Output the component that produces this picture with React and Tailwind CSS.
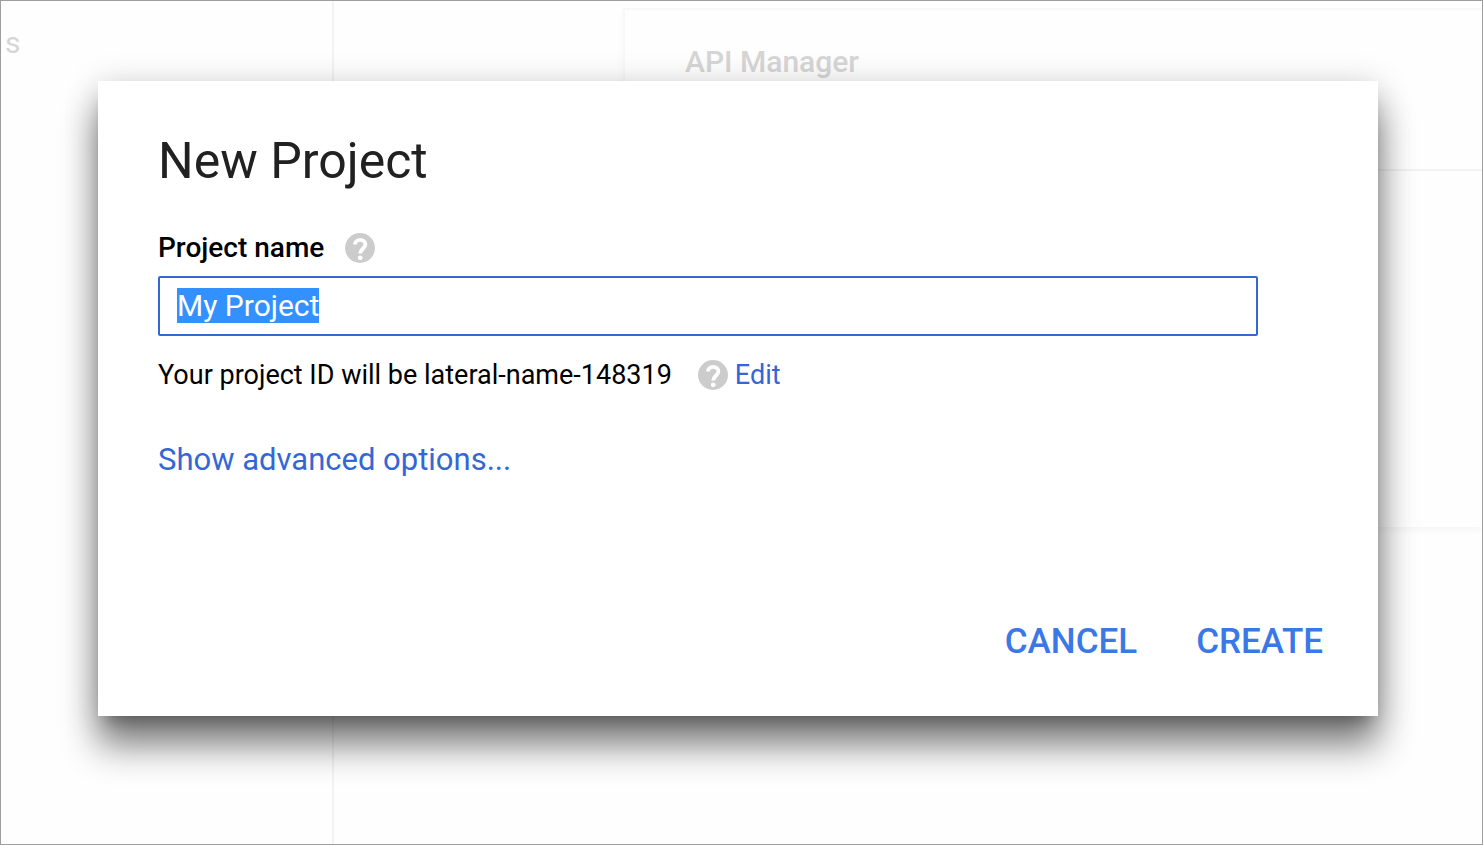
import { useEffect, useRef } from "react";

function HelpButton({ label }) {
  return (
    <button type="button" aria-label={label} className="block shrink-0">
      <svg viewBox="0 0 30 30" className="size-[30px]" aria-hidden="true">
        <circle cx="15" cy="15" r="15" fill="#cccccc" />
        <path
          d="M10 11.6 C10 8.6 12.2 6.9 15.2 6.9 C18.2 6.9 20.4 8.7 20.4 11.6 C20.4 15.2 15.2 16 15.2 20.6"
          fill="none"
          stroke="#ffffff"
          strokeWidth="3.8"
        />
        <circle cx="15.2" cy="24.8" r="2.4" fill="#ffffff" />
      </svg>
    </button>
  );
}

function Backdrop() {
  return (
    <div className="flex min-h-[843px] text-[#d6d6d6]" aria-hidden="true">
      <div className="w-[333px] shrink-0 border-r-2 border-[#f3f3f3] pl-1 pt-6">
        <p className="text-[30px] leading-9">s</p>
      </div>
      <div className="flex-1 pl-[289px] pt-[7px]">
        <div className="h-[519px] border-l-2 border-t-2 border-[#f8f8f8] shadow-[0_4px_6px_rgba(0,0,0,0.03)]">
          <div className="h-[161px] border-b-2 border-[#f2f2f2] pl-[60px] pt-[34px]">
            <p className="text-[30px] leading-9 font-medium">API Manager</p>
          </div>
        </div>
      </div>
    </div>
  );
}

export default function App() {
  const nameRef = useRef(null);

  useEffect(() => {
    nameRef.current.focus();
    nameRef.current.select();
  }, []);

  return (
    <div className="relative min-h-screen overflow-hidden border border-[#9e9e9e] bg-[#fefefe] font-['Roboto',sans-serif]">
      <Backdrop />
      <div className="absolute inset-0 flex items-start pl-[97px] pr-[104px] pt-20">
        <form
          role="dialog"
          aria-labelledby="dialog-title"
          onSubmit={(e) => e.preventDefault()}
          className="flex min-h-[635px] w-full flex-col bg-white px-[60px] pt-[50px] pb-[49px] text-black shadow-[0_30px_34px_rgba(0,0,0,0.48),0_4px_32px_rgba(0,0,0,0.18),0_12px_14px_-8px_rgba(0,0,0,0.26)]"
        >
          <h1 id="dialog-title" className="text-[50px] leading-[60px] text-[#212121]">
            New Project
          </h1>
          <div className="mt-[39px] flex items-center gap-[21px]">
            <label htmlFor="project-name" className="text-[28px] leading-9 font-medium">
              Project name
            </label>
            <HelpButton label="About project names" />
          </div>
          <input
            id="project-name"
            ref={nameRef}
            type="text"
            defaultValue="My Project"
            className="mt-[10px] mr-[60px] h-[60px] rounded-xs border-2 border-[#3367d6] bg-white px-[17px] pb-[2px] text-[30px] leading-[37px] outline-none selection:bg-[#3390ff] selection:text-white"
          />
          <div className="mt-[21px] flex items-center text-[27px] leading-9">
            <p>Your project ID will be lateral-name-148319</p>
            <div className="ml-[26px] flex items-center gap-[7px]">
              <HelpButton label="About project IDs" />
              <a href="#edit" className="text-[#3367d6]">Edit</a>
            </div>
          </div>
          <a href="#advanced" className="mt-12 self-start text-[31px] leading-[38px] text-[#3367d6]">
            Show advanced options...
          </a>
          <div className="mt-auto -mr-[5px] flex justify-end gap-[59px] text-[35px] leading-[50px] font-medium text-[#3b78e7]">
            <button type="button">CANCEL</button>
            <button type="submit">CREATE</button>
          </div>
        </form>
      </div>
    </div>
  );
}
